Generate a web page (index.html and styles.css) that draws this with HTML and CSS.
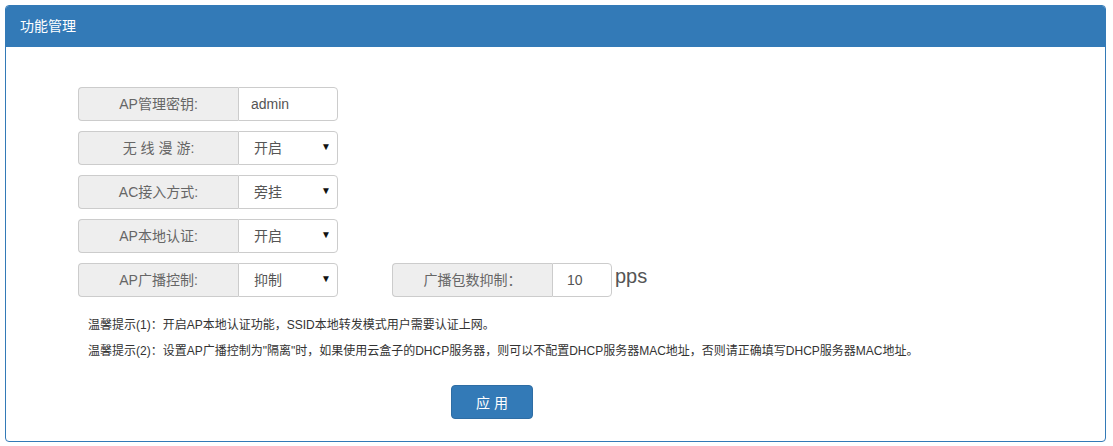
FILE: index.html
```html
<!DOCTYPE html>
<html lang="zh-CN">
<head>
  <meta charset="UTF-8" />
  <meta name="viewport" content="width=device-width, initial-scale=1.0" />
  <title>功能管理</title>
  <link rel="stylesheet" href="styles.css">
</head>
<body>
  <div class="panel">
    <div class="panel-heading">功能管理</div>
    <div class="panel-body">
      <form id="funcForm">
        <div class="form-row">
          <div class="input-group">
            <span class="addon">AP管理密钥:</span>
            <input type="text" class="field" value="admin" />
          </div>
        </div>
        <div class="form-row">
          <div class="input-group">
            <span class="addon">无 线 漫 游:</span>
            <span class="select-wrap">
              <select class="field">
                <option>开启</option>
                <option>关闭</option>
              </select>
              <span class="caret">▼</span>
            </span>
          </div>
        </div>
        <div class="form-row">
          <div class="input-group">
            <span class="addon">AC接入方式:</span>
            <span class="select-wrap">
              <select class="field">
                <option>旁挂</option>
                <option>直连</option>
              </select>
              <span class="caret">▼</span>
            </span>
          </div>
        </div>
        <div class="form-row">
          <div class="input-group">
            <span class="addon">AP本地认证:</span>
            <span class="select-wrap">
              <select class="field">
                <option>开启</option>
                <option>关闭</option>
              </select>
              <span class="caret">▼</span>
            </span>
          </div>
        </div>
        <div class="form-row">
          <div class="input-group">
            <span class="addon">AP广播控制:</span>
            <span class="select-wrap">
              <select class="field">
                <option>抑制</option>
                <option>隔离</option>
              </select>
              <span class="caret">▼</span>
            </span>
          </div>
          <div class="input-group">
            <span class="addon">广播包数抑制：</span>
            <input type="text" class="field small" value="10" />
          </div>
          <span class="unit">pps</span>
        </div>

        <div class="notes">
          <p>温馨提示(1)：开启AP本地认证功能，SSID本地转发模式用户需要认证上网。</p>
          <p>温馨提示(2)：设置AP广播控制为"隔离"时，如果使用云盒子的DHCP服务器，则可以不配置DHCP服务器MAC地址，否则请正确填写DHCP服务器MAC地址。</p>
        </div>

        <div class="actions">
          <button type="submit" class="btn">应 用</button>
        </div>
      </form>
    </div>
  </div>
</body>
</html>
```
FILE: styles.css
```css
body {
  margin: 0;
  padding: 5px 7px 4px 5px;
  font-family: "Liberation Sans", "Noto Sans CJK SC", sans-serif;
  font-size: 14px;
  color: #333;
  background: #fff;
}
.panel {
  border: 1px solid #337ab7;
  border-radius: 4px;
  overflow: hidden;
}
.panel-heading {
  background: #337ab7;
  color: #fff;
  height: 41px;
  line-height: 41px;
  padding: 0 14px;
  font-size: 14px;
}
.panel-body {
  padding: 40px 0 22px 72px;
}
.form-row {
  display: flex;
  align-items: center;
  gap: 54px;
  margin-bottom: 10px;
}
.input-group {
  display: flex;
  height: 34px;
}
.addon {
  width: 160px;
  box-sizing: border-box;
  background: #eee;
  border: 1px solid #ccc;
  border-right: none;
  border-radius: 4px 0 0 4px;
  color: #666;
  text-align: center;
  line-height: 32px;
}
.field {
  width: 100px;
  height: 34px;
  box-sizing: border-box;
  border: 1px solid #ccc;
  border-radius: 0 4px 4px 0;
  background: #fff;
  color: #555;
  font-family: inherit;
  font-size: 14px;
  padding: 0 12px;
  outline: none;
}
.field.small {
  width: 60px;
  padding: 0 14px;
}
.select-wrap {
  position: relative;
  display: block;
}
.select-wrap select {
  appearance: none;
  -webkit-appearance: none;
  padding-left: 15px;
}
.caret {
  position: absolute;
  right: 7px;
  top: 10px;
  font-size: 10px;
  color: #111;
  pointer-events: none;
}
.unit {
  margin-left: -51px;
  font-size: 20px;
  color: #555;
  position: relative;
  top: -4px;
}
.notes {
  margin: 15px 0 0 10px;
  font-size: 12px;
}
.notes p {
  margin: 0;
  line-height: 26px;
}
.actions {
  margin-top: 21px;
  padding-left: 373px;
}
.btn {
  width: 82px;
  height: 34px;
  background: #337ab7;
  border: 1px solid #2e6da4;
  border-radius: 4px;
  color: #fff;
  font-family: inherit;
  font-size: 14px;
  cursor: pointer;
}
.btn:hover {
  background: #286090;
}
```
